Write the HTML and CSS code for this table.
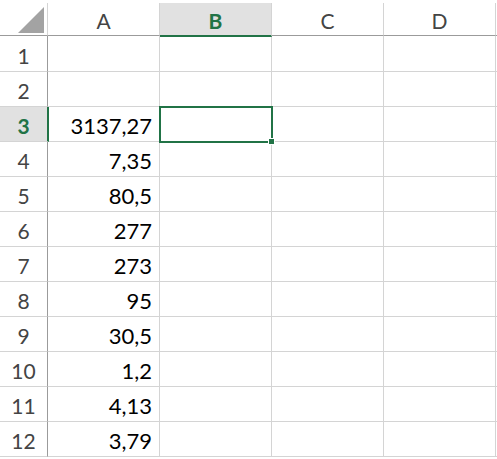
FILE: index.html
```html
<!DOCTYPE html>
<html>
<head>
<meta charset="utf-8">
<link rel="stylesheet" href="styles.css">
</head>
<body>
<div class="sheet">
  <div class="corner"><span class="tri"></span></div>
  <div class="colh">A</div>
  <div class="colh active">B</div>
  <div class="colh">C</div>
  <div class="colh">D</div>
  <div class="colh rest"></div>

  <div class="rowh r1">1</div><div class="cell r1"></div><div class="cell r1"></div><div class="cell r1"></div><div class="cell r1"></div><div class="cell rest r1"></div>
  <div class="rowh">2</div><div class="cell"></div><div class="cell"></div><div class="cell"></div><div class="cell"></div><div class="cell rest"></div>
  <div class="rowh active">3</div><div class="cell num">3137,27</div><div class="cell sel"><span class="selbox"></span><span class="handle"></span></div><div class="cell"></div><div class="cell"></div><div class="cell rest"></div>
  <div class="rowh">4</div><div class="cell num">7,35</div><div class="cell"></div><div class="cell"></div><div class="cell"></div><div class="cell rest"></div>
  <div class="rowh">5</div><div class="cell num">80,5</div><div class="cell"></div><div class="cell"></div><div class="cell"></div><div class="cell rest"></div>
  <div class="rowh">6</div><div class="cell num">277</div><div class="cell"></div><div class="cell"></div><div class="cell"></div><div class="cell rest"></div>
  <div class="rowh">7</div><div class="cell num">273</div><div class="cell"></div><div class="cell"></div><div class="cell"></div><div class="cell rest"></div>
  <div class="rowh">8</div><div class="cell num">95</div><div class="cell"></div><div class="cell"></div><div class="cell"></div><div class="cell rest"></div>
  <div class="rowh">9</div><div class="cell num">30,5</div><div class="cell"></div><div class="cell"></div><div class="cell"></div><div class="cell rest"></div>
  <div class="rowh">10</div><div class="cell num">1,2</div><div class="cell"></div><div class="cell"></div><div class="cell"></div><div class="cell rest"></div>
  <div class="rowh">11</div><div class="cell num">4,13</div><div class="cell"></div><div class="cell"></div><div class="cell"></div><div class="cell rest"></div>
  <div class="rowh">12</div><div class="cell num">3,79</div><div class="cell"></div><div class="cell"></div><div class="cell"></div><div class="cell rest"></div>
</div>
</body>
</html>
```
FILE: styles.css
```css
html, body {
  margin: 0;
  padding: 0;
  background: #ffffff;
  overflow: hidden;
}
body {
  font-family: Lato, "Open Sans", sans-serif;
}
.sheet {
  display: grid;
  grid-template-columns: 48px repeat(4, 112px) 1fr;
  grid-template-rows: 33px 36px repeat(11, 35px);
  padding-top: 3px;
  width: 497px;
}
.corner {
  position: relative;
  border-right: 1px solid #d4d4d4;
  border-bottom: 1px solid #9b9b9b;
}
.tri {
  position: absolute;
  left: 18px;
  top: 4px;
  width: 0;
  height: 0;
  border-left: 26px solid transparent;
  border-bottom: 26px solid #a3a3a3;
}
.colh {
  display: flex;
  align-items: center;
  justify-content: center;
  font-size: 21px;
  color: #444444;
  padding-top: 3px;
  border-right: 1px solid #d4d4d4;
  border-bottom: 1px solid #9b9b9b;
  box-sizing: border-box;
}
.colh.rest {
  border-right: none;
}
.colh.active {
  background: #e1e1e1;
  color: #217346;
  font-weight: bold;
  border-bottom: 2px solid #217346;
  margin-bottom: -1px;
  position: relative;
  z-index: 1;
}
.rowh {
  display: flex;
  align-items: center;
  justify-content: center;
  font-size: 21px;
  color: #444444;
  padding-top: 3px;
  border-right: 1px solid #9b9b9b;
  border-bottom: 1px solid #d4d4d4;
  box-sizing: border-box;
}
.rowh.active {
  background: #e1e1e1;
  color: #217346;
  font-weight: bold;
  border-right: 2px solid #217346;
  margin-right: -1px;
  position: relative;
  z-index: 1;
}
.cell {
  border-right: 1px solid #d4d4d4;
  border-bottom: 1px solid #d4d4d4;
  box-sizing: border-box;
  font-size: 22px;
  color: #000000;
  display: flex;
  align-items: center;
  justify-content: flex-end;
  padding: 3px 7px 0 0;
}
.cell.rest {
  border-right: none;
}
.sel {
  position: relative;
  overflow: visible;
}
.selbox {
  position: absolute;
  left: -1px;
  top: -1px;
  right: -2px;
  bottom: -2px;
  border: 2px solid #217346;
  z-index: 2;
}
.handle {
  position: absolute;
  right: -4px;
  bottom: -4px;
  width: 5px;
  height: 5px;
  background: #217346;
  border: 1px solid #ffffff;
  z-index: 3;
}
```
